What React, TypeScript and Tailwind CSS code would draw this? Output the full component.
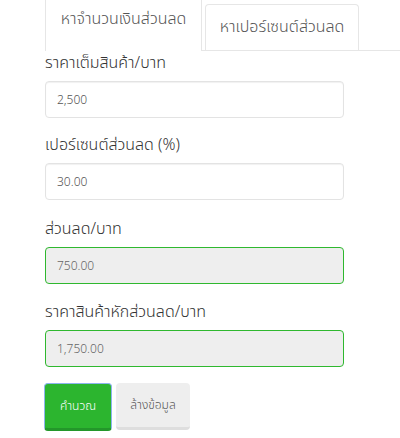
import React from "react";

const font = { fontFamily: '"Noto Sans Thai", "Noto Sans Thai UI", "Noto Sans", "DejaVu Sans", sans-serif' };

function Field({ label, value, readOnly, className }: { label: string; value: string; readOnly?: boolean; className?: string }) {
  return (
    <div className={className}>
      <div className="h-[24px] text-[16px] leading-[24px] font-light text-[#333]">{label}</div>
      <div
        className={
          "mt-[6px] h-[37px] rounded-[4px] border flex items-center pl-[11px] text-[12px] font-light " +
          (readOnly
            ? "border-[#2fb82f] bg-[#eeeeee] text-[#666]"
            : "border-[#e3e3e3] bg-white text-[#555] shadow-[inset_0_1px_1px_rgba(0,0,0,0.06)]")
        }
      >
        {value}
      </div>
    </div>
  );
}

export default function App() {
  return (
    <div className="w-[400px] h-[438px] bg-white overflow-hidden pl-[45px]" style={font}>
      <div className="flex items-end border-b border-[#e6e6e6] h-[51px]">
        <div className="h-[51px] -mb-px w-[157px] bg-white border-x border-[#e6e6e6] flex justify-center pt-[7px] text-[16px] leading-[24px] font-light text-[#555]">
          หาจำนวนเงินส่วนลด
        </div>
        <div className="ml-[3px] h-[46px] w-[154px] rounded-t-[4px] border-x border-t border-[#e6e6e6] flex justify-center pt-[10px] text-[16px] leading-[24px] font-light text-[#555]">
          หาเปอร์เซนต์ส่วนลด
        </div>
      </div>
      <div className="w-[299px]">
        <Field label="ราคาเต็มสินค้า/บาท" value="2,500" />
        <Field className="mt-[15px]" label="เปอร์เซนต์ส่วนลด (%)" value="30.00" />
        <Field className="mt-[17px]" label="ส่วนลด/บาท" value="750.00" readOnly />
        <Field className="mt-[16px]" label="ราคาสินค้าหักส่วนลด/บาท" value="1,750.00" readOnly />
        <div className="mt-[16px] flex gap-[4px] -ml-px">
          <button className="h-[48px] w-[68px] rounded-[4px] bg-[#2cb52f] border border-[#8db4ee] border-b-[3px] border-b-[#23972a] text-white text-[12px] font-light flex items-center justify-center">
            คำนวณ
          </button>
          <button className="h-[47px] w-[74px] rounded-[4px] bg-[#eeeeee] border-b-[3px] border-b-[#dedede] text-[#555] text-[12px] font-light flex items-center justify-center">
            ล้างข้อมูล
          </button>
        </div>
      </div>
    </div>
  );
}
